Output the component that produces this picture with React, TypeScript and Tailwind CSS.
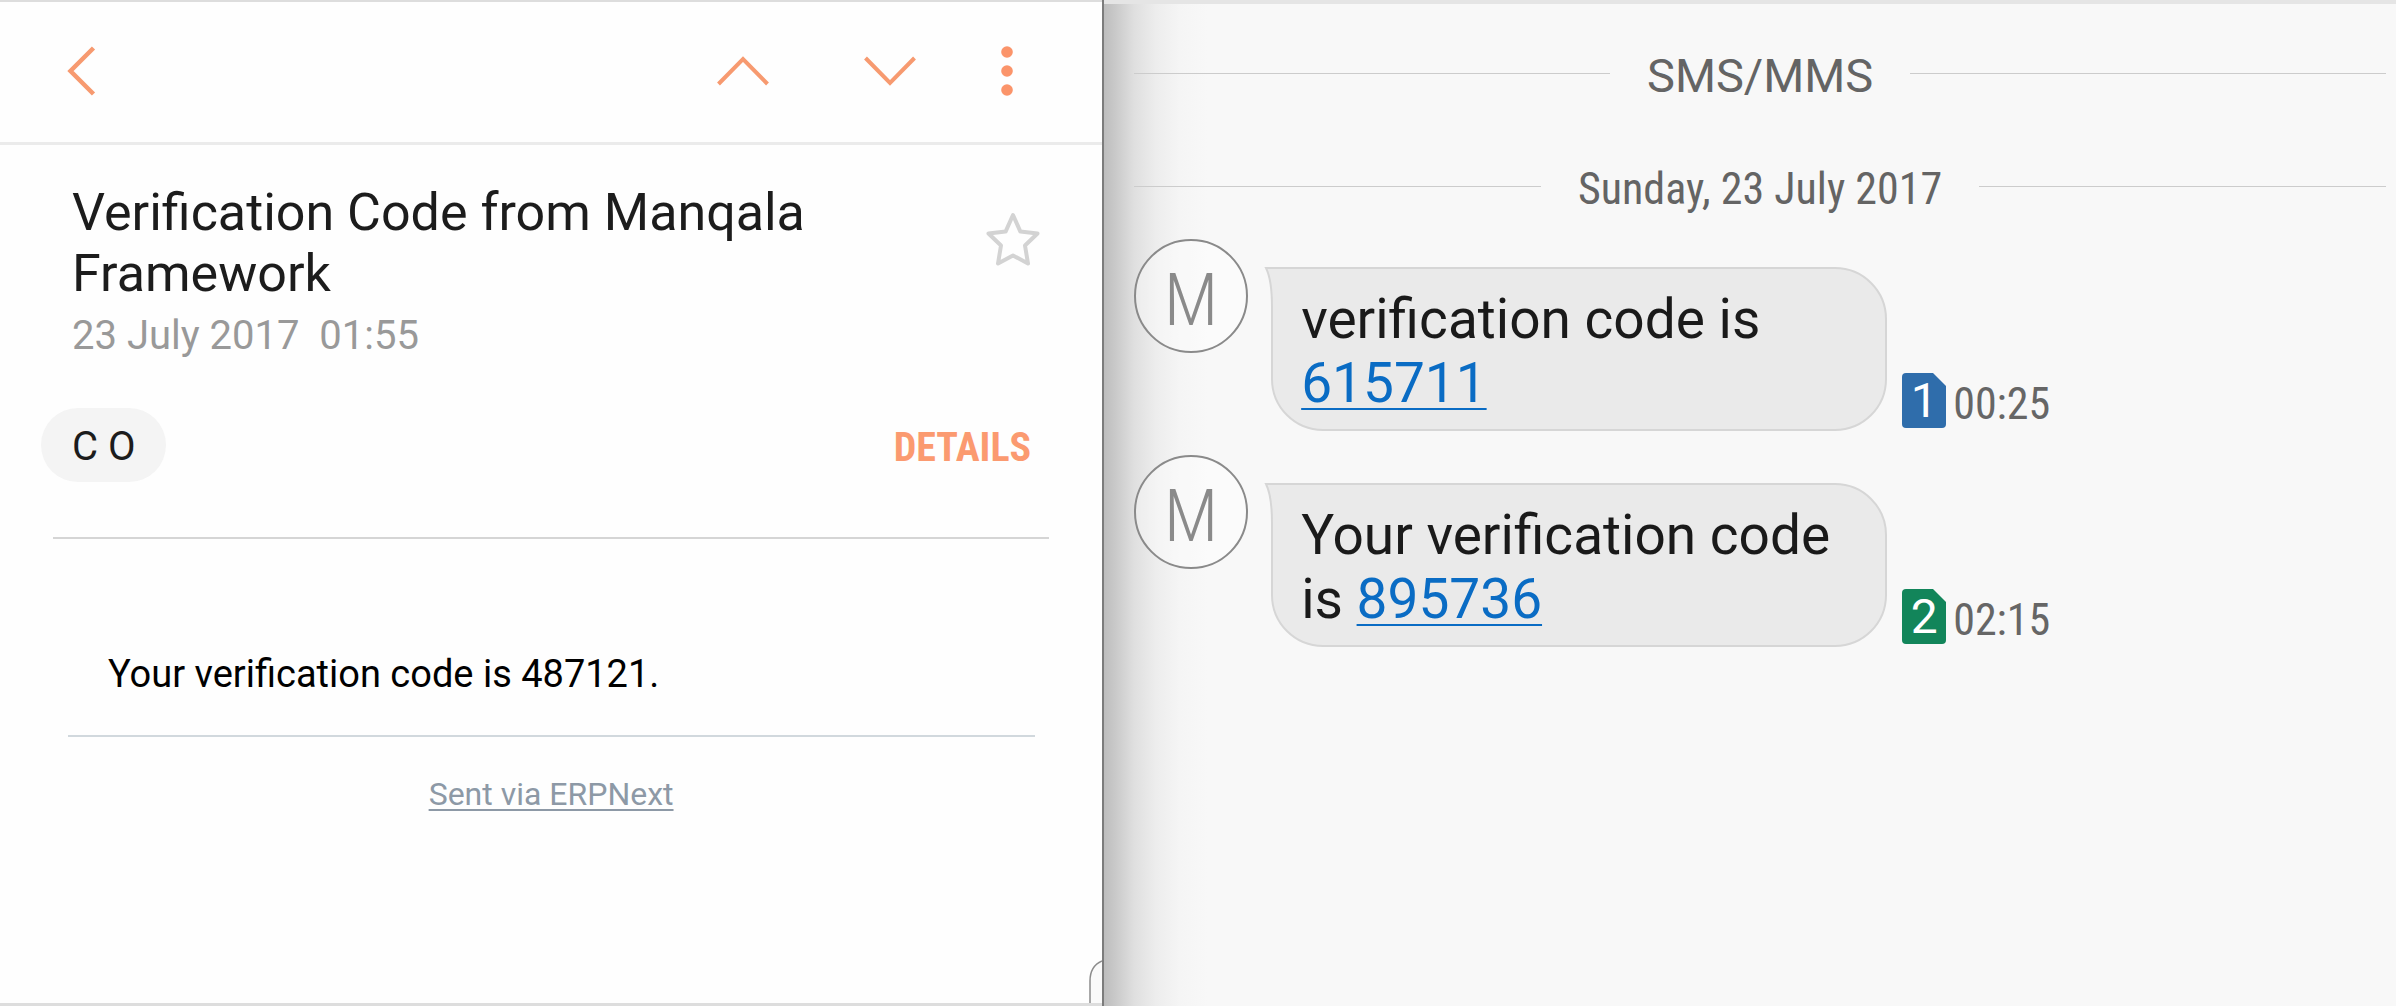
interface SmsMessage {
  id: number
  text: string
  code: string
  sim: 1 | 2
  time: string
}

const MESSAGES: SmsMessage[] = [
  { id: 1, text: 'verification code is', code: '615711', sim: 1, time: '00:25' },
  { id: 2, text: 'Your verification code is', code: '895736', sim: 2, time: '02:15' },
]

const SIM_COLORS = {
  1: 'fill-[#2f6dab]',
  2: 'fill-[#12855a]',
}

const CONDENSED = "font-['Roboto_Condensed',Roboto,sans-serif]"

function MailToolbar() {
  return (
    <header className="flex h-[145px] items-center border-t-2 border-b-3 border-t-[#dddddd] border-b-[#ebebeb] pr-[83px] pb-[2px] pl-[66px] text-[#f79a70]">
      <button type="button" aria-label="Back">
        <svg width="32" height="52" viewBox="0 0 32 52" fill="none" stroke="currentColor" strokeWidth="4.5">
          <path d="M27.5 3 4.5 26l23 23" />
        </svg>
      </button>
      <button type="button" aria-label="Previous" className="ml-auto">
        <svg width="56" height="32" viewBox="0 0 56 32" fill="none" stroke="currentColor" strokeWidth="4">
          <path d="M3.5 29 28 4l24.5 25" />
        </svg>
      </button>
      <button type="button" aria-label="Next" className="ml-[91px]">
        <svg width="56" height="32" viewBox="0 0 56 32" fill="none" stroke="currentColor" strokeWidth="4">
          <path d="M3.5 3 28 28 52.5 3" />
        </svg>
      </button>
      <button type="button" aria-label="More options" className="ml-[77px]">
        <svg width="24" height="56" viewBox="0 0 24 56" fill="#fb946a">
          <circle cx="12" cy="9" r="5.8" />
          <circle cx="12" cy="28" r="5.8" />
          <circle cx="12" cy="47" r="5.8" />
        </svg>
      </button>
    </header>
  )
}

function MailPane() {
  return (
    <article className="relative flex w-[46%] flex-col border-b-3 border-[#dddddd] bg-[#fefefe]">
      <MailToolbar />

      <div className="flex items-start justify-between pt-[37px] pr-[60px] pl-[72px]">
        <div>
          <h1 className="max-w-[800px] text-[52px] leading-[61px] text-[#1c1c1c]">
            Verification Code from Manqala Framework
          </h1>
          <time className="mt-[8px] block text-[40px] leading-[48px] whitespace-pre text-[#999999]">23 July 2017  01:55</time>
        </div>
        <button type="button" aria-label="Star" className="mt-[28px]">
          <svg width="58" height="58" viewBox="0 0 58 58" fill="none" stroke="#d3d3d3" strokeWidth="4" strokeLinejoin="round">
            <path d="M29 5l7.4 16.6L53.5 23.5 41 35.5 44 53.5 29 45.5 14 53.5 17 35.5 4.5 23.5 21.6 21.6z" />
          </svg>
        </button>
      </div>

      {/* Sender */}
      <div className="mt-[48px] flex items-center justify-between pr-[71px] pl-[41px]">
        <span className="rounded-full bg-[#f4f4f4] px-[31px] pt-[15px] pb-[11px] text-[40px] leading-[48px] text-[#1c1c1c]">C O</span>
        <button type="button" className={`${CONDENSED} pt-[5px] text-[40px] leading-[48px] font-bold text-[#fb9a70]`}>DETAILS</button>
      </div>
      <hr className="mt-[55px] mr-[53px] ml-[53px] border-t-2 border-[#d5d5d5]" />

      {/* Body */}
      <p className="mt-[113px] px-[108px] text-[38px] leading-[44px] text-black">Your verification code is 487121.</p>
      <hr className="mt-[39px] mr-[67px] ml-[68px] border-t-2 border-[#d1d8dd]" />
      <a href="#" className="mt-[37px] self-center text-[32px] leading-[40px] text-[#8d99a6] underline decoration-2 underline-offset-4">
        Sent via ERPNext
      </a>

      <svg className="absolute right-0 bottom-0" width="13" height="43" viewBox="0 0 13 43" fill="#fafafa" stroke="#8c8c8c" strokeWidth="1.5">
        <path d="M13 1C6 4 1 11 1 21v23h13" />
      </svg>
    </article>
  )
}

function Separator({ label, className }: { label: string; className: string }) {
  return (
    <div className="flex items-center gap-[37px] pr-[10px] pl-[30px]">
      <span className="mb-[5px] h-px flex-1 bg-[#cccccc]" />
      <h2 className={`leading-[56px] text-[#646464] ${className}`}>{label}</h2>
      <span className="mb-[5px] h-px flex-1 bg-[#cccccc]" />
    </div>
  )
}

function SimBadge({ sim }: { sim: 1 | 2 }) {
  return (
    <span className="grid h-[55px] w-[44px] place-items-center">
      <svg className={`col-start-1 row-start-1 ${SIM_COLORS[sim]}`} width="44" height="55" viewBox="0 0 44 55">
        <path d="M4 0h27l13 13v38a4 4 0 0 1-4 4H4a4 4 0 0 1-4-4V4a4 4 0 0 1 4-4z" />
      </svg>
      <span className="col-start-1 row-start-1 text-[48px] leading-[55px] text-white">{sim}</span>
    </span>
  )
}

function Message({ message }: { message: SmsMessage }) {
  return (
    <li className="flex items-start">
      <span className={`${CONDENSED} flex size-[114px] shrink-0 items-center justify-center rounded-full border-2 border-[#8a8a8a] bg-white/40 pt-[8px] text-[73px] leading-[80px] font-light text-[#8a8a8a]`}>
        M
      </span>
      <div className="mt-7 ml-[23px] flex items-end">
        <div className="relative w-[616px] rounded-[52px] rounded-tl-none border-2 border-[#d6d6d6] bg-[#eaeaea] pt-[18px] pr-[28px] pb-[14px] pl-[28px]">
          <svg className="absolute -top-[2px] -left-[9px]" width="20" height="40" viewBox="0 0 20 40">
            <path d="M2 1h18v39H8C8 24 7 11 2 1z" fill="#eaeaea" />
            <path d="M20 1H2C7 11 8 24 8 40" fill="none" stroke="#d6d6d6" strokeWidth="2" />
          </svg>
          <p className="text-[55px] leading-[64px] text-[#1a1a1a]">
            {message.text}{' '}
            <a href="#" className="text-[#0a6cc4] underline decoration-2 underline-offset-[6px]">{message.code}</a>
          </p>
        </div>
        <div className="ml-[15px] flex items-end gap-[7px] pb-[3px]">
          <SimBadge sim={message.sim} />
          <time className={`${CONDENSED} text-[44px] leading-[48px] text-[#666666]`}>{message.time}</time>
        </div>
      </div>
    </li>
  )
}

function SmsPane() {
  return (
    <section className="flex-1 border-t-4 border-[#e5e5e5] bg-[#f8f8f8]">
      <div className="min-h-full bg-[linear-gradient(90deg,#bdbdbd_0px,#cacaca_12px,#dfdfdf_30px,#ededed_52px,#f5f5f5_76px,#f8f8f8_104px)] pt-[44px]">
        <Separator label="SMS/MMS" className="text-[47px]" />
        <div className="mt-[57px]">
          <Separator label="Sunday, 23 July 2017" className={`${CONDENSED} text-[44px]`} />
        </div>
        <ul className="mt-[22px] flex flex-col gap-6 pl-[30px]">
          {MESSAGES.map((m) => (
            <Message key={m.id} message={m} />
          ))}
        </ul>
      </div>
    </section>
  )
}

export default function App() {
  return (
    <main className="flex min-h-screen font-[Roboto,sans-serif]">
      <MailPane />
      <div className="w-[2px] shrink-0 bg-[#7c7c7c]" />
      <SmsPane />
    </main>
  )
}
